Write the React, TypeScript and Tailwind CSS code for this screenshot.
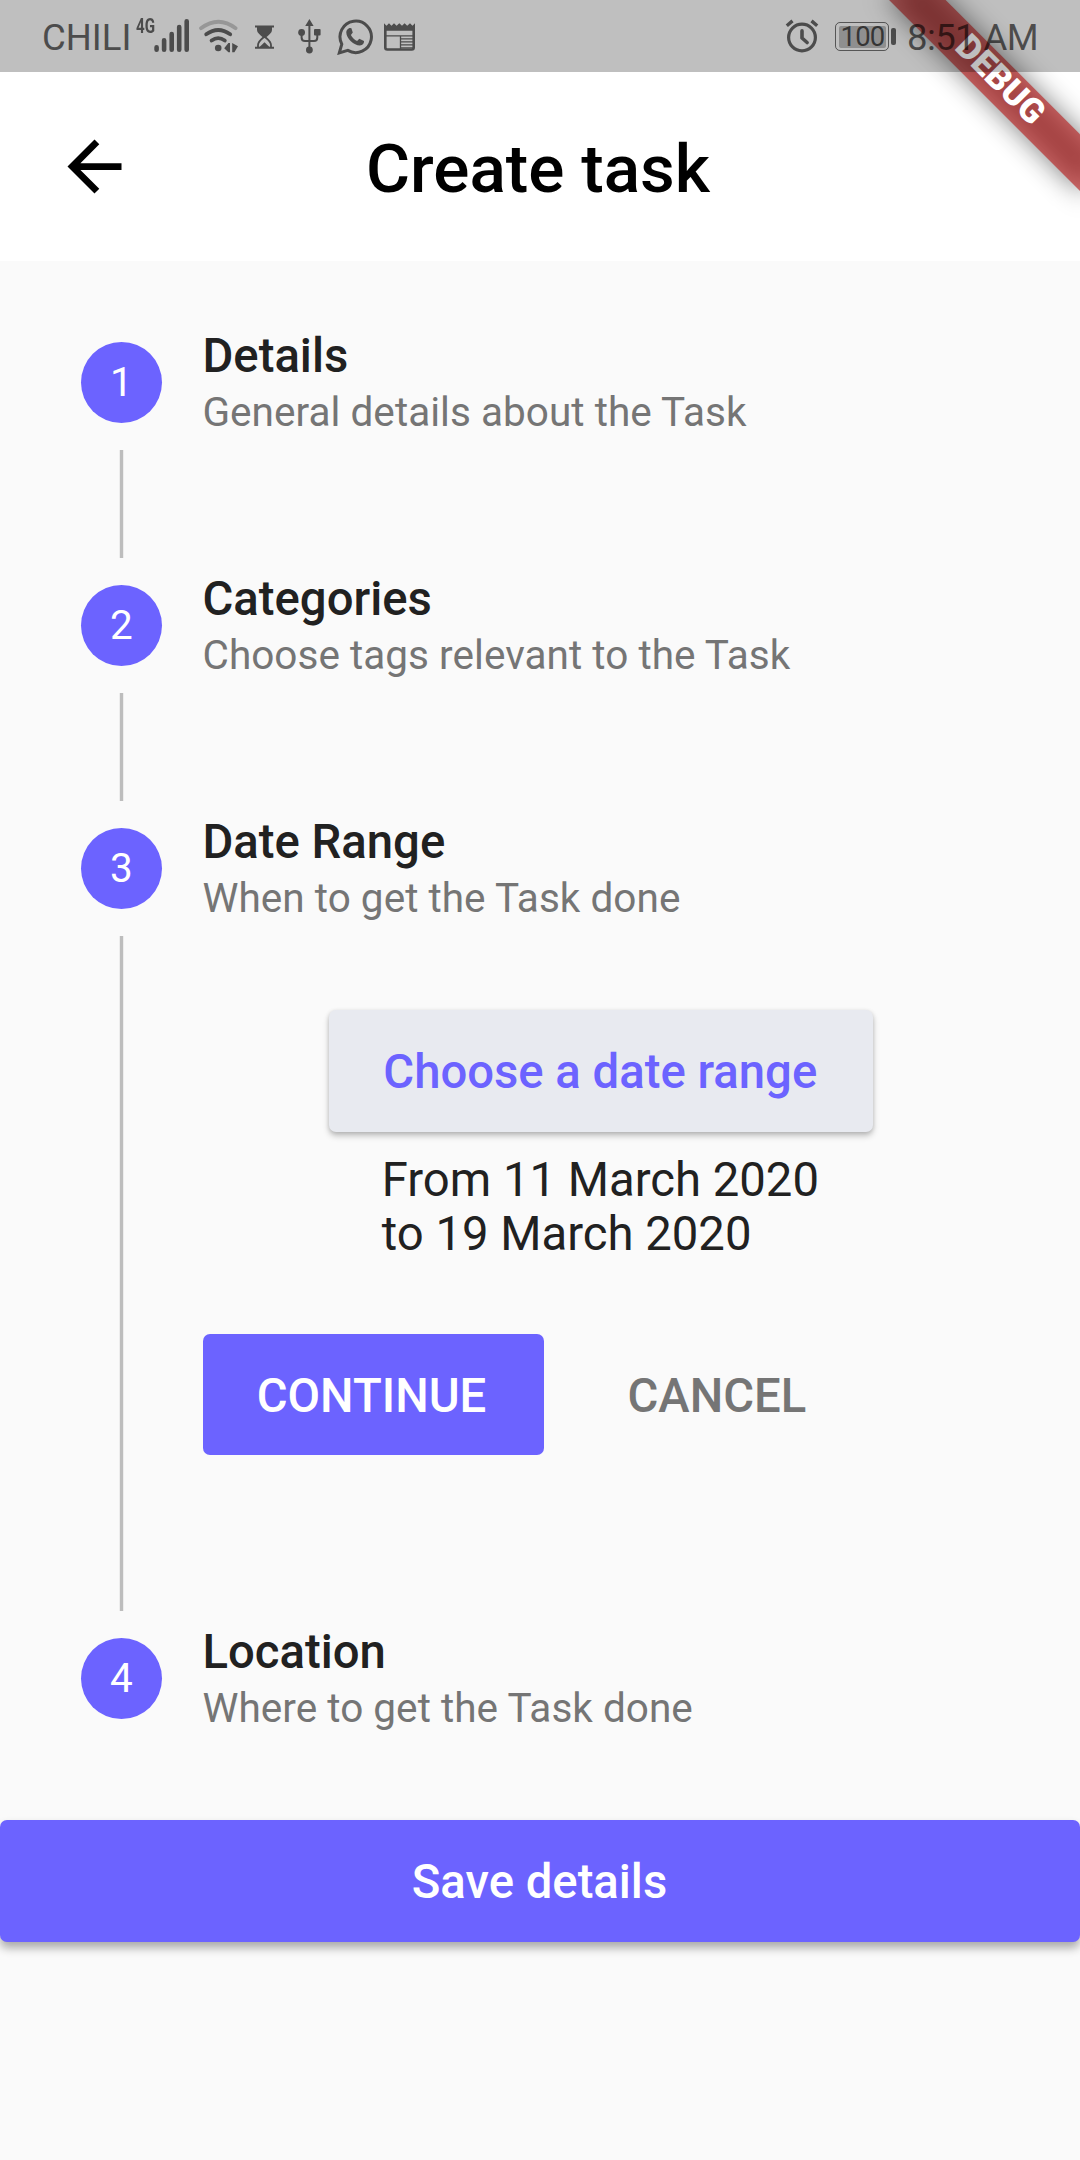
import type { ReactNode } from "react";

function SignalIcon() {
  return (
    <svg className="w-[36px] h-[34px]" viewBox="154 19 36 34" stroke="currentColor" strokeWidth="4.6" strokeLinecap="round">
      <path d="M156.6 47.2V49.7M164.1 40.3V49.7M171.7 34V49.7M179.2 27V49.7M186.7 21.3V49.7" />
    </svg>
  );
}

function WifiIcon() {
  return (
    <svg className="w-[40px] h-[34px]" viewBox="198 19 40 34" fill="none" stroke="currentColor" strokeWidth="3.8" strokeLinecap="round">
      <path d="M201 28.2Q218.5 15.2 235.6 28.2" opacity=".35" />
      <path d="M206.2 34.3Q218.2 25.6 230.2 34.3" />
      <path d="M211.6 40.6Q218.2 35.6 224.8 40.6" />
      <circle cx="218.2" cy="48" r="3.3" fill="currentColor" stroke="none" />
      <path d="M224.2 48.2L228.4 43H230V52.2H228.4ZM232.2 43L238 46.2L234.4 52.2H232.2Z" fill="currentColor" stroke="none" />
    </svg>
  );
}

function HourglassIcon() {
  return (
    <svg className="w-[19px] h-[24px]" viewBox="255 24.5 19 24">
      <path d="M255 25H274V27H255ZM255 46.2H274V48.2H255Z" fill="currentColor" />
      <path d="M257 26.5H272V29.5C272 32 269 34.5 265.6 37.2H263.4C260 34.5 257 32 257 29.5Z" fill="currentColor" />
      <path d="M264.5 36C260.5 39.5 258 41 258 44.5V47M264.5 36C268.5 39.5 271 41 271 44.5V47" fill="none" stroke="currentColor" strokeWidth="1.8" />
      <path d="M259.5 46.5L264.5 41.8L269.5 46.5Z" fill="currentColor" />
    </svg>
  );
}

function UsbIcon() {
  return (
    <svg className="w-[24px] h-[36px]" viewBox="298 19 24 36" fill="none" stroke="currentColor" strokeWidth="2">
      <path d="M309.4 24V50" />
      <path d="M301.6 32V37.5Q301.6 41 305 41H314Q317.3 41 317.3 37.5V32" />
      <path d="M309.4 19L313.6 26H305.2Z" fill="currentColor" stroke="none" />
      <circle cx="301.6" cy="32.4" r="3.4" fill="currentColor" stroke="none" />
      <rect x="314" y="29" width="6.6" height="6.6" rx="1" fill="currentColor" stroke="none" />
      <circle cx="309.4" cy="50" r="3.4" fill="currentColor" stroke="none" />
    </svg>
  );
}

function WhatsappIcon() {
  return (
    <svg className="w-[36px] h-[36px]" viewBox="336.5 18.5 36 36" fill="none">
      <path d="M338.8 52.4L341.3 43.6A15.7 15.7 0 1 1 347.3 49.9Z" stroke="currentColor" strokeWidth="3" />
      <path d="M349.6 27.4C348.3 27.4 345.8 29 345.8 32C345.8 38 353.5 45 359.4 45C362.4 45 363.7 42.8 363.5 40.6L358.8 38.2L356.6 40.4C354 39.4 351.5 36.8 350.4 34.5L352.3 32L350.9 27.8Z" fill="currentColor" />
    </svg>
  );
}

function NewsIcon() {
  return (
    <svg className="w-[31px] h-[28px]" viewBox="384 22.5 31 28" fill="none" stroke="currentColor">
      <path d="M385.3 28V47Q385.3 49 387.3 49H411.7Q413.7 49 413.7 47V28" strokeWidth="2.6" />
      <path d="M384 22.8L386.5 25.2L389 22.8L391.5 25.2L394 22.8L396.6 25.2L399.3 22.8L402 25.2L404.6 22.8L407.2 25.2L410 22.8L412.5 25.2L415 22.8V30.2H384Z" fill="currentColor" stroke="none" />
      <path d="M386 35.4H413M400.5 35V49" strokeWidth="1.3" />
      <path d="M401 38.4H413M401 41.4H413M401 44.4H413M401 47.2H413" strokeWidth="1.1" />
    </svg>
  );
}

function AlarmIcon() {
  return (
    <svg className="w-[34px] h-[34px]" viewBox="785.5 19.5 34 34" fill="none" stroke="currentColor" strokeWidth="3.2">
      <circle cx="802.5" cy="38" r="13.4" />
      <path d="M802.5 31.4V38.5L807.6 43" strokeWidth="3.6" strokeLinecap="round" strokeLinejoin="round" />
      <path d="M787.3 26.2L793 21.4M817.7 26.2L812 21.4" strokeWidth="3.4" />
    </svg>
  );
}

function StatusBar() {
  return (
    <div className="relative z-20 flex h-[72px] bg-black/25 text-[#4c4c4c]">
      <span className="ml-[42px] mt-[16px] w-[94px] text-[36.5px] leading-[43px] whitespace-nowrap">CHILI</span>
      <span className="mt-[16px] w-[18px] origin-left scale-x-[.74] text-[20.5px] font-bold leading-[21px] whitespace-nowrap">4G</span>
      <div className="mt-[19px]"><SignalIcon /></div>
      <div className="ml-[8px] mt-[19px]"><WifiIcon /></div>
      <div className="ml-[17px] mt-[24.5px]"><HourglassIcon /></div>
      <div className="ml-[24px] mt-[19px]"><UsbIcon /></div>
      <div className="ml-[14.5px] mt-[18.5px]"><WhatsappIcon /></div>
      <div className="ml-[11.5px] mt-[22.5px]"><NewsIcon /></div>
      <div className="ml-auto mt-[18.5px]"><AlarmIcon /></div>
      <div className="ml-[16px] mt-[22px] h-[29px] w-[54px] rounded-[5px] border-[1.5px] border-black/55 p-[2.5px]">
        <div className="flex h-full items-center justify-center rounded-[2px] bg-black/25 pl-[1px] text-[27.5px] leading-none tracking-[-0.8px] text-black/65">100</div>
      </div>
      <div className="ml-[2px] mt-[28px] h-[17px] w-[4.5px] rounded-[2px] bg-black/60" />
      <span className="ml-[11.5px] mr-[42px] mt-[16px] w-[131px] text-[36.5px] leading-[43px] whitespace-nowrap tracking-[-0.6px] text-black/60">8:51 AM</span>
    </div>
  );
}

function DebugBanner() {
  return (
    <div className="absolute left-full top-0 z-10 origin-top-left rotate-45">
      <div className="absolute left-[-135px] top-[94.5px] h-[40.5px] w-[270px] bg-black/50 blur-[13.4px]" />
      <div className="absolute left-[-135px] top-[94.5px] flex h-[40.5px] w-[270px] items-center justify-center bg-[#b71c1c]/63 pb-[5px] text-[34.4px] font-black leading-none text-white">
        DEBUG
      </div>
    </div>
  );
}

type StepProps = { number: number; title: string; subtitle: string; last?: boolean; children?: ReactNode };

function Step({ number, title, subtitle, last, children }: StepProps) {
  return (
    <section className="flex gap-[40.5px] px-[81px]">
      <div className="flex w-[81px] shrink-0 flex-col items-center pt-[81px]">
        <div className="flex size-[81px] shrink-0 items-center justify-center rounded-full bg-[#6c63ff] text-[40.5px] leading-none text-white">
          {number}
        </div>
        {!last && <div className="mt-[27px] -mb-[54px] w-[3px] grow bg-[#bdbdbd] shadow-[1px_0_0_#ededed,-1px_0_0_#ededed]" />}
      </div>
      <div className="grow">
        <div className="h-[243px] pt-[67px]">
          <h2 className="text-[47.25px] font-medium leading-[56px] text-[#212121]">{title}</h2>
          <p className="mt-[4px] text-[40.5px] leading-[48px] tracking-[0.03px] text-[#757575]">{subtitle}</p>
        </div>
        {children}
      </div>
    </section>
  );
}

export default function App() {
  return (
    <div className="relative flex h-[2160px] w-[1080px] flex-col overflow-hidden bg-[#fafafa] font-[Roboto,sans-serif]">
      <div className="bg-white">
        <StatusBar />
        <header className="flex h-[189px] pl-[54px]">
          <svg className="mt-[54px] size-[81px]" viewBox="0 0 24 24" fill="#000">
            <path d="M20 11H7.83l5.59-5.59L12 4l-8 8 8 8 1.41-1.41L7.83 13H20v-2z" />
          </svg>
          <h1 className="ml-[231px] mt-[57px] text-[67.5px] font-medium leading-[79px] text-black whitespace-nowrap">Create task</h1>
        </header>
      </div>
      <DebugBanner />
      <main>
        <Step number={1} title="Details" subtitle="General details about the Task" />
        <Step number={2} title="Categories" subtitle="Choose tags relevant to the Task" />
        <Step number={3} title="Date Range" subtitle="When to get the Task done">
          <div className="flex h-[567px] flex-col pt-[19.5px]">
            <div className="flex flex-col items-center">
              <button className="flex h-[122px] w-[544.5px] items-start justify-center rounded-[7px] bg-[#e8eaf0] pr-[1px] pt-[34.5px] text-[47.25px] font-medium leading-[56px] text-[#6c63ff] shadow-[0_4px_6px_rgba(0,0,0,0.22),0_1px_4px_rgba(0,0,0,0.12)]">
                Choose a date range
              </button>
              <p className="mt-[21.5px] w-[438px] text-[47.25px] leading-[54px] text-[#212121] whitespace-nowrap">
                From 11 March 2020
                <br />
                to 19 March 2020
              </p>
            </div>
            <div className="mt-[72.5px] flex gap-[28.5px]">
              <button className="flex h-[121.5px] w-[341px] items-start justify-center rounded-[7px] bg-[#6c63ff] pr-[3px] pt-[34.5px] text-[47.25px] font-medium leading-[56px] text-white">CONTINUE</button>
              <button className="flex h-[121.5px] items-start px-[55.5px] pt-[34.5px] text-[47.25px] font-medium leading-[56px] text-[#757575]">CANCEL</button>
            </div>
          </div>
        </Step>
        <Step number={4} title="Location" subtitle="Where to get the Task done" last />
      </main>
      <button className="mt-[20px] flex h-[121.5px] w-full items-start justify-center rounded-[7px] bg-[#6c63ff] pr-[1px] pt-[34px] text-[47.25px] font-medium leading-[56px] text-white shadow-[0_6px_10px_rgba(0,0,0,0.32)]">
        Save details
      </button>
    </div>
  );
}
